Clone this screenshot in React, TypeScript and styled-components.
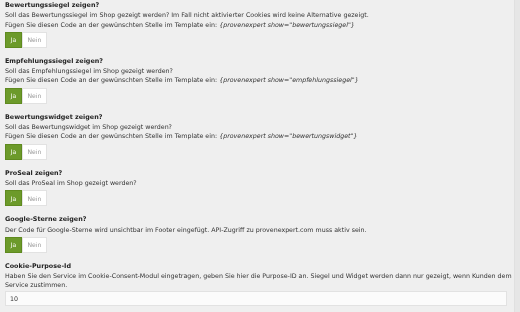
import React from 'react'
import styled, { createGlobalStyle } from 'styled-components'

const GlobalStyle = createGlobalStyle`
  html, body {
    margin: 0;
    padding: 0;
    background: #efefef;
  }
  body {
    font-family: "DejaVu Sans", Verdana, sans-serif;
    color: #333;
    -webkit-font-smoothing: antialiased;
  }
`

const Page = styled.div`
  width: 520px;
  height: 312px;
  box-sizing: border-box;
  display: flex;
  overflow: hidden;
`

const Panel = styled.div`
  flex: 1;
  padding: 1px 0 0 5px;
  display: flex;
  flex-direction: column;
  gap: 9px;
  will-change: transform;
`

const Edge = styled.div`
  width: 5px;
  background: #e6e6e6;
  border-left: 1px solid #e0e0e0;
`

const Section = styled.section`
  display: flex;
  flex-direction: column;
`

const Title = styled.h3`
  margin: 0;
  font-size: 6.4px;
  line-height: 9.3px;
  font-weight: bold;
  color: #222;
`

const Text = styled.p`
  margin: 0;
  font-size: 6.3px;
  line-height: 9.3px;
  color: #333;
  max-width: 512px;

  em {
    font-style: italic;
  }
`

const Toggle = styled.div`
  display: flex;
  margin-top: 3px;
`

const ToggleButton = styled.button<{ $active?: boolean }>`
  height: 16px;
  padding: 0;
  font-family: inherit;
  font-size: 6.1px;
  border: 1px solid ${(p) => (p.$active ? '#5f8a1f' : '#e2e2e2')};
  background: ${(p) => (p.$active ? '#6c9a2a' : '#fff')};
  color: ${(p) => (p.$active ? '#fff' : '#999')};
  width: ${(p) => (p.$active ? '17px' : '25px')};
  cursor: pointer;
`

const Input = styled.input`
  margin-top: 1px;
  width: 502px;
  height: 15px;
  box-sizing: border-box;
  border: 1px solid #e2e2e2;
  background: #fbfbfb;
  padding: 0 4px;
  font-family: inherit;
  font-size: 6.3px;
  color: #333;
  outline: none;
`

type Item = {
  title: string
  lines: ReadonlyArray<React.ReactNode>
}

const code = (show: string) => (
  <>
    Fügen Sie diesen Code an der gewünschten Stelle im Template ein:{' '}
    <em>{`{provenexpert show="${show}"}`}</em>
  </>
)

const items: ReadonlyArray<Item> = [
  {
    title: 'Bewertungssiegel zeigen?',
    lines: [
      'Soll das Bewertungssiegel im Shop gezeigt werden? Im Fall nicht aktivierter Cookies wird keine Alternative gezeigt.',
      code('bewertungssiegel'),
    ],
  },
  {
    title: 'Empfehlungssiegel zeigen?',
    lines: ['Soll das Empfehlungssiegel im Shop gezeigt werden?', code('empfehlungssiegel')],
  },
  {
    title: 'Bewertungswidget zeigen?',
    lines: ['Soll das Bewertungswidget im Shop gezeigt werden?', code('bewertungswidget')],
  },
  {
    title: 'ProSeal zeigen?',
    lines: ['Soll das ProSeal im Shop gezeigt werden?'],
  },
  {
    title: 'Google-Sterne zeigen?',
    lines: [
      'Der Code für Google-Sterne wird unsichtbar im Footer eingefügt. API-Zugriff zu provenexpert.com muss aktiv sein.',
    ],
  },
]

const YesNo: React.FC = () => (
  <Toggle>
    <ToggleButton $active>Ja</ToggleButton>
    <ToggleButton>Nein</ToggleButton>
  </Toggle>
)

export default function App() {
  return (
    <Page>
      <GlobalStyle />
      <Panel>
        {items.map((item) => (
          <Section key={item.title}>
            <Title>{item.title}</Title>
            {item.lines.map((line, i) => (
              <Text key={i}>{line}</Text>
            ))}
            <YesNo />
          </Section>
        ))}
        <Section>
          <Title>Cookie-Purpose-Id</Title>
          <Text>
            Haben Sie den Service im Cookie-Consent-Modul eingetragen, geben Sie hier die
            Purpose-ID an. Siegel und Widget werden dann nur gezeigt, wenn Kunden dem Service
            zustimmen.
          </Text>
          <Input defaultValue="10" />
        </Section>
      </Panel>
      <Edge />
    </Page>
  )
}
